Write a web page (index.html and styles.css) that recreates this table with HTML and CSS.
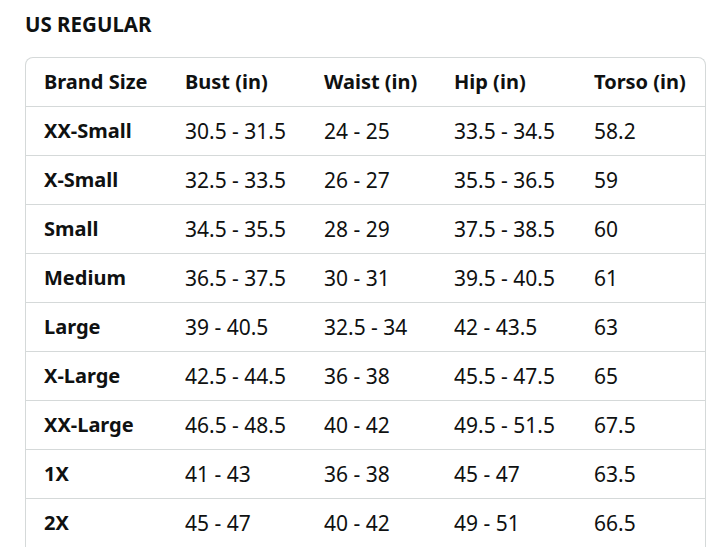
FILE: index.html
```html
<!DOCTYPE html>
<html lang="en">
<head>
<meta charset="utf-8">
<title>US Regular Size Chart</title>
<link rel="stylesheet" href="styles.css">
</head>
<body>
<main class="page">
  <h2 class="title">US REGULAR</h2>
  <div class="chart">
    <table class="sizes">
      <colgroup>
        <col class="c1"><col class="c2"><col class="c3"><col class="c4"><col class="c5">
      </colgroup>
      <thead>
        <tr><th>Brand Size</th><th>Bust (in)</th><th>Waist (in)</th><th>Hip (in)</th><th>Torso (in)</th></tr>
      </thead>
      <tbody>
        <tr><th>XX-Small</th><td>30.5 - 31.5</td><td>24 - 25</td><td>33.5 - 34.5</td><td>58.2</td></tr>
        <tr><th>X-Small</th><td>32.5 - 33.5</td><td>26 - 27</td><td>35.5 - 36.5</td><td>59</td></tr>
        <tr><th>Small</th><td>34.5 - 35.5</td><td>28 - 29</td><td>37.5 - 38.5</td><td>60</td></tr>
        <tr><th>Medium</th><td>36.5 - 37.5</td><td>30 - 31</td><td>39.5 - 40.5</td><td>61</td></tr>
        <tr><th>Large</th><td>39 - 40.5</td><td>32.5 - 34</td><td>42 - 43.5</td><td>63</td></tr>
        <tr><th>X-Large</th><td>42.5 - 44.5</td><td>36 - 38</td><td>45.5 - 47.5</td><td>65</td></tr>
        <tr><th>XX-Large</th><td>46.5 - 48.5</td><td>40 - 42</td><td>49.5 - 51.5</td><td>67.5</td></tr>
        <tr><th>1X</th><td>41 - 43</td><td>36 - 38</td><td>45 - 47</td><td>63.5</td></tr>
        <tr><th>2X</th><td>45 - 47</td><td>40 - 42</td><td>49 - 51</td><td>66.5</td></tr>
      </tbody>
    </table>
  </div>
</main>
</body>
</html>
```

FILE: styles.css
```css
html, body {
  margin: 0;
  padding: 0;
  background: #ffffff;
}
body {
  font-family: "Noto Sans", "Open Sans", sans-serif;
  color: #0f1111;
}
.page {
  padding: 9px 12px 0 25px;
}
.title {
  margin: 0 0 18px 0;
  font-size: 20.5px;
  line-height: 30px;
  font-weight: 700;
}
.chart {
  border: 1px solid #d5d9d9;
  border-bottom: none;
  border-radius: 8px 8px 0 0;
  width: 679px;
  overflow: hidden;
}
.sizes {
  width: 100%;
  border-collapse: collapse;
  table-layout: fixed;
  font-size: 20px;
}
.c1 { width: 141px; }
.c2 { width: 139px; }
.c3 { width: 130px; }
.c4 { width: 140px; }
.sizes th, .sizes td {
  height: 48px;
  padding: 0 0 0 18px;
  text-align: left;
  vertical-align: middle;
  white-space: nowrap;
  line-height: 24px;
}
.sizes th { font-weight: 700; }
.sizes td { font-weight: 400; font-size: 21px; }
.sizes tbody tr th, .sizes tbody tr td {
  border-top: 1px solid #d5d9d9;
}
```
